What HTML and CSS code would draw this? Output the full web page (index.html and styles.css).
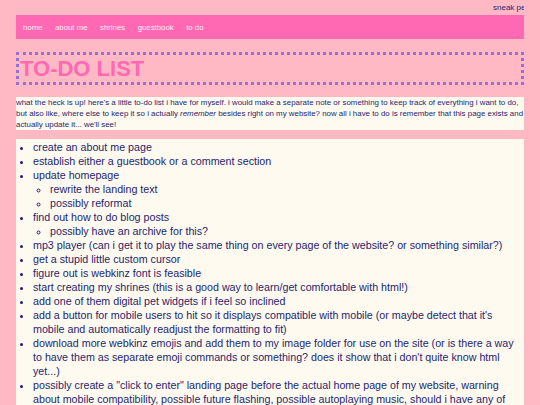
FILE: index.html
```html
<!DOCTYPE html>
<html>
<head>
<meta charset="utf-8">
<title>to-do list</title>
<link rel="stylesheet" href="styles.css">
</head>
<body>
<div class="wrap">
  <div class="ticker"><span class="ticker-text">sneak peek</span></div>
  <nav class="nav">
    <a href="#">home</a>
    <a href="#">about me</a>
    <a href="#">shrines</a>
    <a href="#">guestbook</a>
    <a href="#">to do</a>
  </nav>
  <header class="title-box">
    <h1 class="title">TO-DO LIST</h1>
  </header>
  <p class="intro">what the heck is up! here's a little to-do list i have for myself. i would make a separate note or something to keep track of everything i want to do, but also like, where else to keep it so i actually <em>remember</em> besides right on my website? now all i have to do is remember that this page exists and actually update it... we'll see!</p>
  <div class="list-box">
    <ul class="todo">
      <li>create an about me page</li>
      <li>establish either a guestbook or a comment section</li>
      <li>update homepage
        <ul>
          <li>rewrite the landing text</li>
          <li>possibly reformat</li>
        </ul>
      </li>
      <li>find out how to do blog posts
        <ul>
          <li>possibly have an archive for this?</li>
        </ul>
      </li>
      <li>mp3 player (can i get it to play the same thing on every page of the website? or something similar?)</li>
      <li>get a stupid little custom cursor</li>
      <li>figure out is webkinz font is feasible</li>
      <li>start creating my shrines (this is a good way to learn/get comfortable with html!)</li>
      <li>add one of them digital pet widgets if i feel so inclined</li>
      <li>add a button for mobile users to hit so it displays compatible with mobile (or maybe detect that it's mobile and automatically readjust the formatting to fit)</li>
      <li>download more webkinz emojis and add them to my image folder for use on the site (or is there a way to have them as separate emoji commands or something? does it show that i don't quite know html yet...)</li>
      <li>possibly create a "click to enter" landing page before the actual home page of my website, warning about mobile compatibility, possible future flashing, possible autoplaying music, should i have any of those things on my site</li>
    </ul>
  </div>
</div>
</body>
</html>
```

FILE: styles.css
```css
html, body {
  margin: 0;
  padding: 0;
}
body {
  background: #ffb9c4;
  font-family: "Comic Sans MS", "Liberation Sans", sans-serif;
  color: #1e1e6e;
  overflow: hidden;
  height: 405px;
}
.wrap {
  margin: 0 16px;
}
.ticker {
  height: 15px;
  overflow: hidden;
  white-space: nowrap;
  padding-left: 477px;
  font-size: 8px;
  line-height: 15px;
  color: #2a1e6e;
}
.nav {
  background: #ff69b4;
  height: 24px;
  display: flex;
  align-items: center;
  gap: 12.5px;
  padding-left: 7px;
}
.nav a {
  color: #ffeef4;
  text-decoration: none;
  font-size: 7.8px;
}
.title-box {
  margin-top: 13px;
  border: 3px dotted #9370db;
  height: 27px;
  display: flex;
  align-items: center;
}
.title {
  margin: 0 0 0 1px;
  font-size: 22px;
  font-weight: bold;
  color: #ff69b4;
}
.intro {
  margin: 12px 0 0;
  background: #fffaf0;
  font-size: 7.9px;
  line-height: 11px;
  padding: 0;
}
.list-box {
  margin-top: 9px;
  background: #fffaf0;
  padding: 1px 0 10px;
}
.todo {
  margin: 0;
  padding-left: 17px;
  font-size: 10.7px;
  line-height: 14px;
}
.todo ul {
  margin: 0;
  padding-left: 17px;
  list-style-type: circle;
}
```
